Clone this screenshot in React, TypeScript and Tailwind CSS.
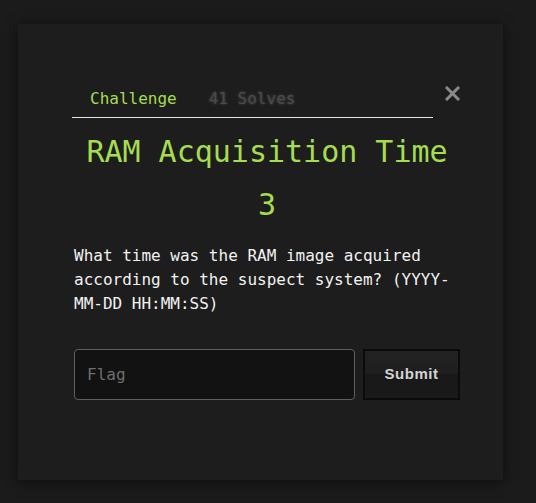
import React from "react";

export default function App() {
  const mono = { fontFamily: '"DejaVu Sans Mono", "Liberation Mono", monospace' };
  return (
    <div className="w-[536px] h-[503px] bg-[#1b1b1b] relative overflow-hidden" style={mono}>
      <div className="absolute left-[18px] top-[24px] w-[485px] h-[456px] bg-[#1d1d1d] shadow-[0_2px_12px_rgba(0,0,0,0.55)] pl-[56px] pr-[43px] pt-[55px] flex flex-col">
        <div className="flex items-start">
          <div className="ml-[-2px] w-[362px] flex border-b border-[#e6e6e6] text-[16px] leading-[24px]">
            <div className="pl-[18px] pr-[16px] pt-2 pb-[6px] text-[#a6dc50]">Challenge</div>
            <div className="px-4 pt-2 pb-[6px] text-[#4a4a4a] [text-shadow:0_0_3px_rgba(90,90,90,0.8)]">41 Solves</div>
          </div>
          <div className="ml-[12px] mt-[7px] w-[15px] h-[15px]">
            <svg width="15" height="15" viewBox="0 0 15 15">
              <path d="M2 2 L13 13 M13 2 L2 13" stroke="#8a8a8a" strokeWidth="3" strokeLinecap="square" />
            </svg>
          </div>
        </div>
        <h2 className="mt-[16px] text-center text-[30px] leading-[36px] text-[#a6dc50]">RAM Acquisition Time</h2>
        <h3 className="mt-[17px] text-center text-[30px] leading-[36px] text-[#a6dc50]">3</h3>
        <p className="mt-[21px] text-[16px] leading-[24px] text-[#f2f2f2]">
          What time was the RAM image acquired according to the suspect system? (YYYY-MM-DD HH:MM:SS)
        </p>
        <div className="mt-[33px] flex gap-[8px]">
          <input
            placeholder="Flag"
            className="w-[281px] h-[51px] bg-[#121212] border border-[#5e5e5e] rounded-[4px] px-[12px] text-[16px] text-[#ddd] placeholder:text-[#6e6e6e] outline-none"
            style={mono}
          />
          <button
            className="w-[97px] h-[51px] border-2 border-[#0b0b0b] bg-[linear-gradient(#222222,#1e1e1e_50%,#181818_50%,#1a1a1a)] text-[15px] font-bold tracking-[0.5px] text-[#d4d4d4]"
            style={{ fontFamily: '"Liberation Sans", Arial, sans-serif' }}
          >
            Submit
          </button>
        </div>
      </div>
    </div>
  );
}
